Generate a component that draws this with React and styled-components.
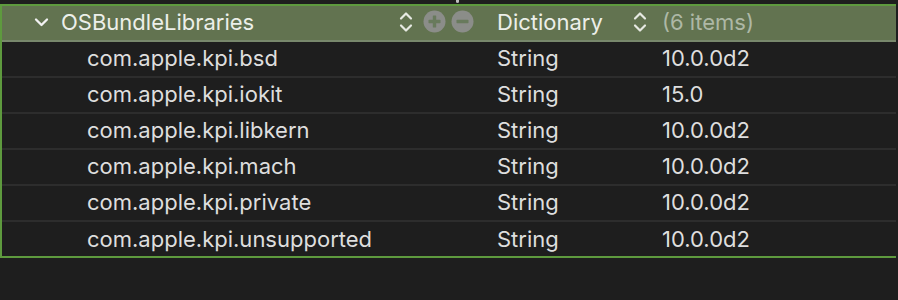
import styled, { createGlobalStyle } from 'styled-components';

const GlobalStyle = createGlobalStyle`
  html, body {
    margin: 0;
    padding: 0;
    background: #1e1e1e;
  }
  body {
    font-family: Inter, "Noto Sans", sans-serif;
    -webkit-font-smoothing: antialiased;
  }
  * {
    box-sizing: border-box;
  }
`;

const rows = [
  ['com.apple.kpi.bsd', 'String', '10.0.0d2'],
  ['com.apple.kpi.iokit', 'String', '15.0'],
  ['com.apple.kpi.libkern', 'String', '10.0.0d2'],
  ['com.apple.kpi.mach', 'String', '10.0.0d2'],
  ['com.apple.kpi.private', 'String', '10.0.0d2'],
  ['com.apple.kpi.unsupported', 'String', '10.0.0d2'],
];

const Chevron = () => (
  <svg width="15" height="10" viewBox="0 0 15 10">
    <path d="M2 2.5 L7.5 8 L13 2.5" fill="none" stroke="#f2f2f2" strokeWidth="2.3" strokeLinecap="round" strokeLinejoin="round" />
  </svg>
);

const Stepper = () => (
  <svg width="14" height="24" viewBox="0 0 14 24">
    <path d="M2 8.5 L7 3.5 L12 8.5" fill="none" stroke="#e6e9e2" strokeWidth="2.2" strokeLinecap="round" strokeLinejoin="round" />
    <path d="M2 15.5 L7 20.5 L12 15.5" fill="none" stroke="#e6e9e2" strokeWidth="2.2" strokeLinecap="round" strokeLinejoin="round" />
  </svg>
);

const RoundButton = ({ plus }) => (
  <svg width="23" height="23" viewBox="0 0 23 23">
    <circle cx="11.5" cy="11.5" r="11" fill="#8b8d89" />
    <rect x="5.5" y="9.8" width="12" height="3.4" rx="0.6" fill="#687a5c" />
    {plus && <rect x="9.8" y="5.5" width="3.4" height="12" rx="0.6" fill="#687a5c" />}
  </svg>
);

const App = () => {
  return (
    <Page>
      <GlobalStyle />
      <TopStrip>
        <Tick />
      </TopStrip>
      <Table>
        <HeaderRow>
          <KeyCell>
            <Disclosure>
              <Chevron />
            </Disclosure>
            <HeaderKey>OSBundleLibraries</HeaderKey>
            <Controls>
              <Stepper />
              <Buttons>
                <RoundButton plus />
                <RoundButton />
              </Buttons>
            </Controls>
          </KeyCell>
          <TypeCell>
            <span>Dictionary</span>
            <Stepper />
          </TypeCell>
          <ValueCell $muted>(6 items)</ValueCell>
        </HeaderRow>
        {rows.map(([key, type, value], i) => (
          <Row key={key} $last={i === rows.length - 1}>
            <KeyCell $child>{key}</KeyCell>
            <TypeCell>{type}</TypeCell>
            <ValueCell>{value}</ValueCell>
          </Row>
        ))}
      </Table>
    </Page>
  );
};

export default App;

const Page = styled.div`
  width: 898px;
  height: 300px;
  background: #1e1e1e;
  overflow: hidden;
`;

const TopStrip = styled.div`
  height: 4px;
  display: flex;
  padding-left: 456px;
`;

const Tick = styled.div`
  width: 3px;
  height: 3px;
  background: #bdbdbd;
  border-radius: 0 0 2px 2px;
`;

const Table = styled.div`
  border-top: 2px solid #5e9a3e;
  border-bottom: 2px solid #5e9a3e;
  border-left: 2px solid #5e9a3e;
  margin-right: 2px;
`;

const RowBase = styled.div`
  display: grid;
  grid-template-columns: 495px 165px 1fr;
  align-items: center;
  height: 36px;
  font-size: 22px;
  line-height: 1;
  color: #dedede;
  padding-bottom: 3px;
`;

const HeaderRow = styled(RowBase)`
  background: #627350;
  border-bottom: 2px solid #78886c;
  color: #ecefe9;
`;

const Row = styled(RowBase)`
  height: ${(p) => (p.$last ? '34px' : '36px')};
  border-bottom: ${(p) => (p.$last ? 'none' : '2px solid #2d2d2d')};
  padding-bottom: ${(p) => (p.$last ? '1px' : '3px')};
`;

const KeyCell = styled.div`
  display: flex;
  align-items: center;
  padding-left: ${(p) => (p.$child ? '85px' : '32px')};
`;

const Disclosure = styled.span`
  display: flex;
  width: 27px;
`;

const HeaderKey = styled.span`
  flex: 1;
`;

const Controls = styled.div`
  display: flex;
  align-items: center;
  gap: 10px;
  padding-right: 23px;

  svg {
    display: block;
  }
`;

const Buttons = styled.div`
  display: flex;
  gap: 5px;
`;

const TypeCell = styled.div`
  display: flex;
  align-items: center;
  justify-content: space-between;
  padding-right: 15px;

  svg {
    display: block;
  }
`;

const ValueCell = styled.div`
  color: ${(p) => (p.$muted ? '#aeb8a6' : '#dedede')};
`;
